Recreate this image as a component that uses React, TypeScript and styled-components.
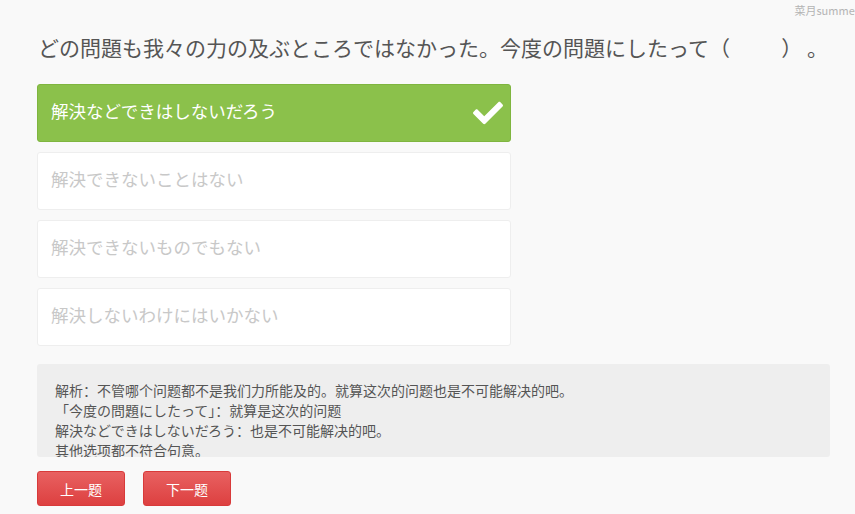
import React, { useState } from "react";
import styled, { createGlobalStyle } from "styled-components";
import { FaCheck } from "react-icons/fa";

const GlobalStyle = createGlobalStyle`
  html, body {
    margin: 0;
    padding: 0;
    background: #f9f9f9;
    font-family: "Microsoft YaHei", "Noto Sans CJK SC", "Liberation Sans", sans-serif;
  }
`;

const Page = styled.div`
  width: 855px;
  height: 514px;
  overflow: hidden;
  position: relative;
`;

const Author = styled.div`
  height: 20px;
  line-height: 20px;
  text-align: right;
  font-size: 11px;
  color: #b4b4b4;
  white-space: nowrap;
  margin-right: -4px;
`;

const Content = styled.div`
  padding: 0 25px 0 37px;
`;

const Question = styled.div`
  font-family: "Noto Sans CJK JP", sans-serif;
  font-size: 21px;
  line-height: 28px;
  color: #555;
  margin: 13px 0 23px 1px;
  white-space: pre;
`;

const Options = styled.div`
  display: flex;
  flex-direction: column;
  gap: 10px;
  width: 474px;
`;

const Option = styled.div<{ $selected?: boolean }>`
  height: 58px;
  box-sizing: border-box;
  display: flex;
  align-items: center;
  justify-content: space-between;
  padding: 0 7px 5px 13px;
  border-radius: 3px;
  border: 1px solid ${(p) => (p.$selected ? "#7fb53f" : "#eeeeee")};
  background: ${(p) => (p.$selected ? "#8bc14b" : "#fff")};
  color: ${(p) => (p.$selected ? "#fff" : "#c8c8c8")};
  font-family: "Noto Sans CJK JP", sans-serif;
  font-size: 17.5px;
  cursor: pointer;
`;

const Check = styled(FaCheck)`
  width: 30px;
  height: 30px;
  color: #fff;
  margin-top: 4px;
`;

const Analysis = styled.div`
  margin-top: 18px;
  width: 793px;
  height: 93px;
  box-sizing: border-box;
  overflow: hidden;
  background: #eeeeee;
  border-radius: 3px;
  padding: 16px 18px 0;
  font-size: 14px;
  line-height: 20px;
  color: #555;
`;

const Buttons = styled.div`
  display: flex;
  gap: 18px;
  margin-top: 14px;
`;

const NavButton = styled.button`
  width: 88px;
  height: 35px;
  border: 1px solid #d83a3a;
  border-radius: 3px;
  background: linear-gradient(#e86161, #dd4040);
  color: #fff;
  font-family: "Noto Sans CJK SC", sans-serif;
  font-size: 14px;
  cursor: pointer;
`;

const options = [
  "解決などできはしないだろう",
  "解決できないことはない",
  "解決できないものでもない",
  "解決しないわけにはいかない",
];

const analysisLines = [
  "解析：不管哪个问题都不是我们力所能及的。就算这次的问题也是不可能解决的吧。",
  "「今度の問題にしたって」：就算是这次的问题",
  "解決などできはしないだろう：也是不可能解决的吧。",
  "其他选项都不符合句意。",
];

export default function App() {
  const [selected, setSelected] = useState(0);

  return (
    <Page>
      <GlobalStyle />
      <Author>菜月summer</Author>
      <Content>
        <Question>どの問題も我々の力の及ぶところではなかった。今度の問題にしたって（　　  ） 。</Question>
        <Options>
          {options.map((text, i) => (
            <Option key={i} $selected={selected === i} onClick={() => setSelected(i)}>
              <span>{text}</span>
              {selected === i && <Check />}
            </Option>
          ))}
        </Options>
        <Analysis>
          {analysisLines.map((line, i) => (
            <div key={i}>{line}</div>
          ))}
        </Analysis>
        <Buttons>
          <NavButton>上一题</NavButton>
          <NavButton>下一题</NavButton>
        </Buttons>
      </Content>
    </Page>
  );
}
